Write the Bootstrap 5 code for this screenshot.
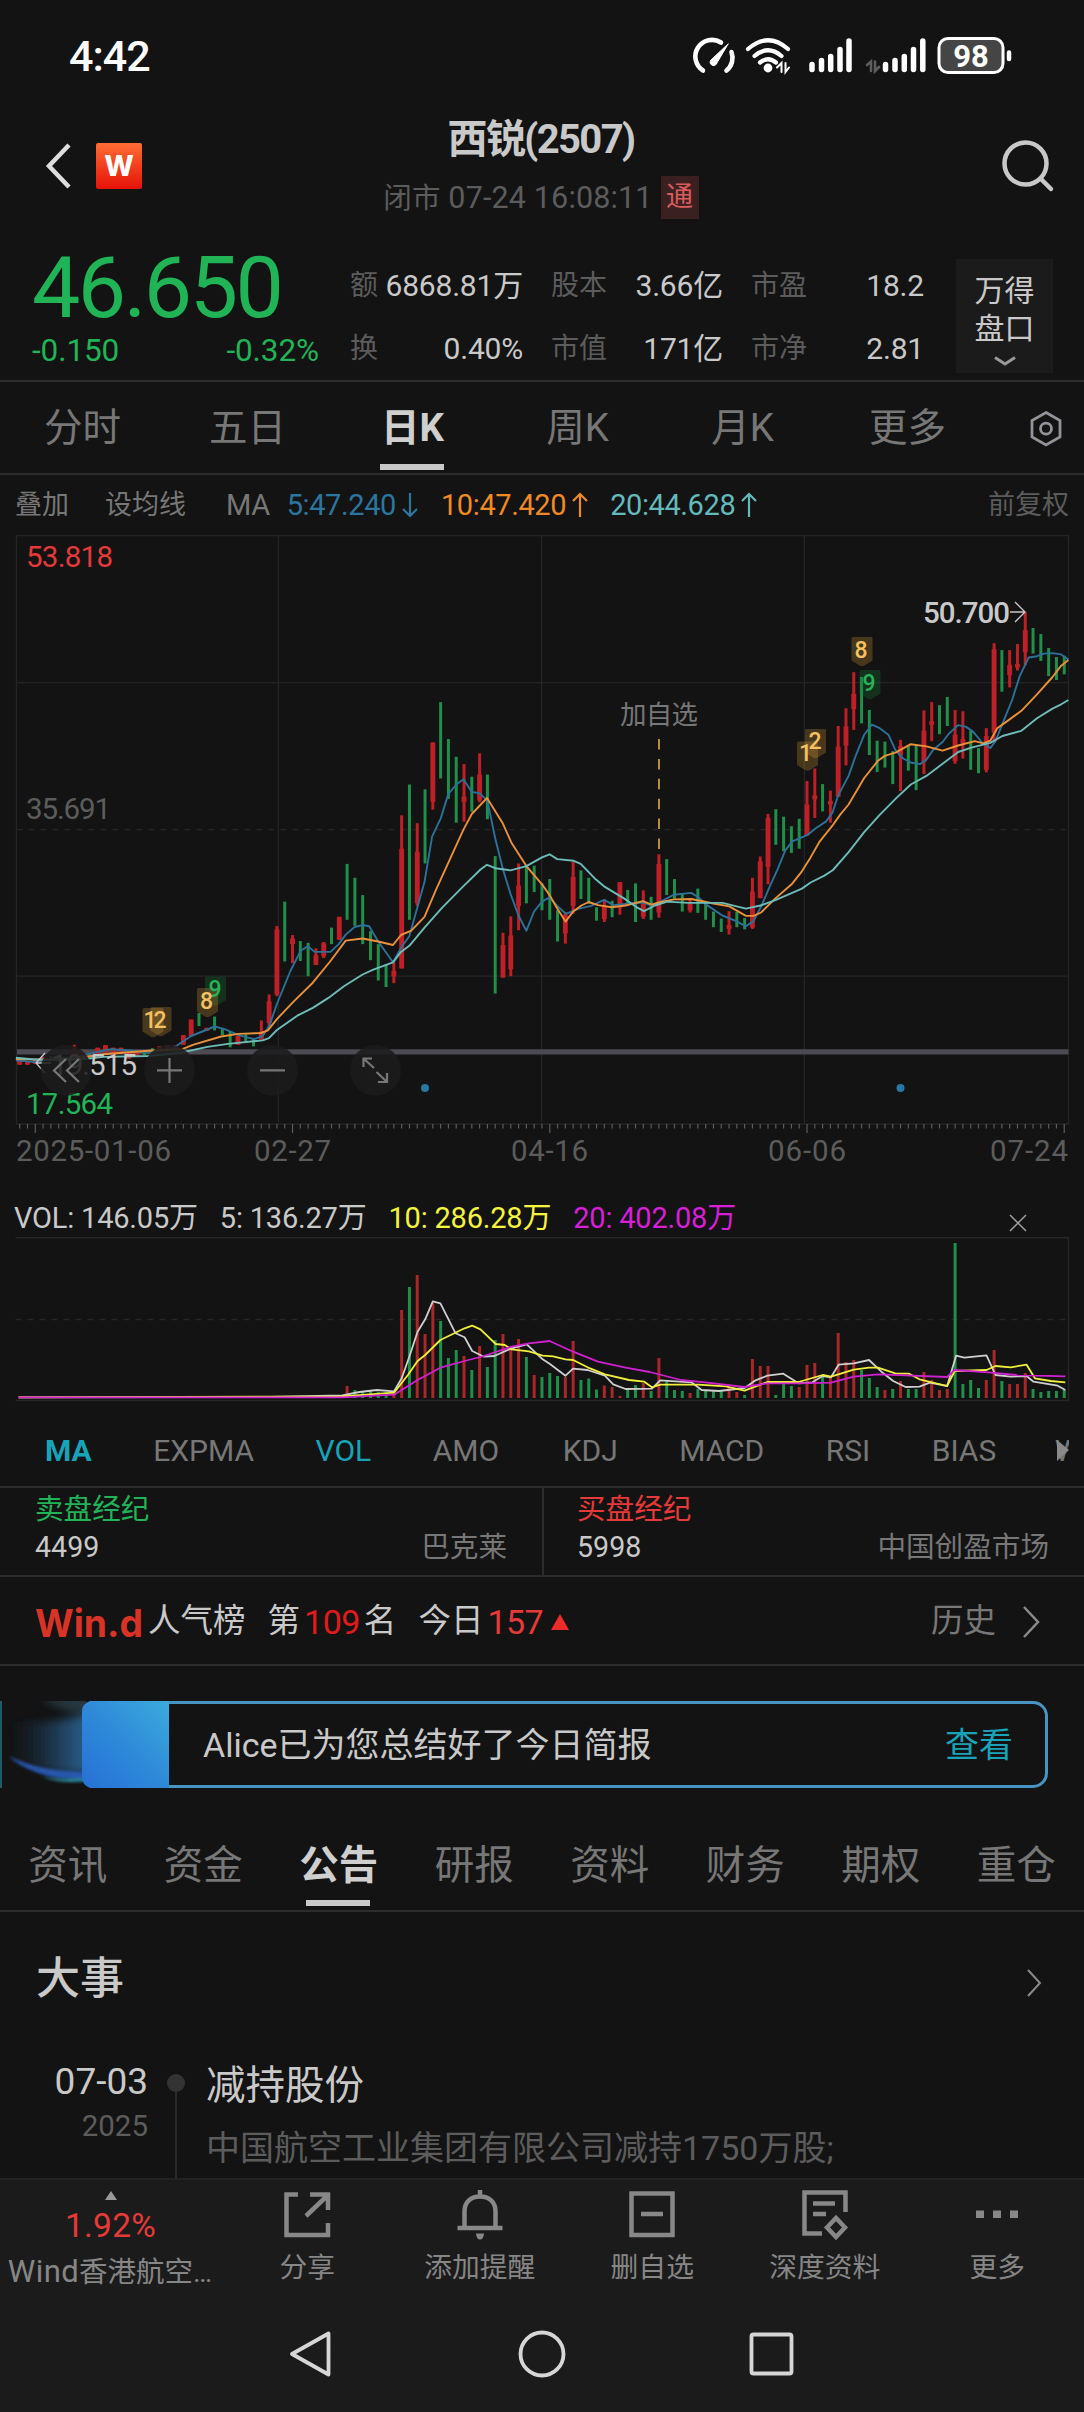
<!DOCTYPE html>
<html lang="zh-CN" data-bs-theme="dark">
<head>
<meta charset="utf-8">
<meta name="viewport" content="width=device-width, initial-scale=1">
<title>西锐(2507)</title>
<link href="https://cdn.jsdelivr.net/npm/bootstrap@5.3.0/dist/css/bootstrap.min.css" rel="stylesheet">
<style>
:root{--ink:#c9c9c9;--dim:#777;--dimmer:#5c5c5c;--up:#e53a38;--down:#21b457;--rule:#2c2c2e;--teal:#19a3b8}
body{margin:0;background:#131313;color:var(--ink);font-family:Roboto,"Noto Sans CJK SC",sans-serif;font-size:28px;line-height:1;width:1084px;height:2412px;overflow:hidden}
svg{display:block;flex:none;overflow:visible}
.t-dim{color:var(--dim)}.t-dimmer{color:var(--dimmer)}.t-up{color:var(--up)}.t-down{color:var(--down)}.t-teal{color:var(--teal)}
.rule-b{border-bottom:2px solid var(--rule)}
.nowrap{white-space:nowrap}
.status-bar{height:112px;padding:0 72px 0 69px}
.clock{font-size:43px;font-weight:500;letter-spacing:-1px}
.head{height:133px;padding:0 29px 0 44px}
.head-left{width:260px;padding-top:31px}
.head-mid{padding-top:5px}
.head-right{width:277px;padding-top:26px}
.app-w{width:46px;height:46px;background:linear-gradient(#ff6d34,#e51208);color:#fff;font:800 28px Inter,sans-serif;border-radius:2px}
.stock-name{font-size:40px;font-weight:700;letter-spacing:-1.6px;line-height:46px}
.stock-time{font-size:30.500px;line-height:43px;letter-spacing:.15px;margin-top:13px}
.stock-time .cjk{font-size:28.500px}
.tong{width:38px;height:43px;background:#3b2021;color:#d95b5b;font-size:27px}
.quote{height:137px;padding:0 31px 0 32px}
.price{font-size:86px;letter-spacing:-2.5px;line-height:86px}
.delta{width:287px;font-size:31.500px;letter-spacing:-.1px}
.stat-grid{width:574px;display:grid;grid-template-columns:173px 172px 173px;column-gap:28px;grid-auto-rows:63px;padding-top:9px;margin-left:31px}
.stat-grid .val{font-size:30px;letter-spacing:-.2px}
.pankou{width:97px;height:114px;background:#1b1b1b;font-size:30px;line-height:38px;padding-top:13px;margin-top:14px}
.ktabs{height:93px;font-size:38.500px;padding-top:2px}
.ktabs .kt{width:165px}
.is-on{color:#cfcfcf;font-weight:700}
.bar{width:64px;height:6px;background:#c9c9c9;position:absolute;left:50%;margin-left:-33px}
.ma-row{height:60px;padding:0 15px;font-size:27px}
.ma-row .num{font-size:29px;letter-spacing:-.4px}
.vol-row{height:52px;padding:15px 57px 0 14px;font-size:29px;letter-spacing:-.2px}
.ind-row{height:81px;gap:61.500px;margin-right:15px;padding:10px 0 0 45px;font-size:30px;overflow:hidden}
.broker{height:91px;font-size:28.600px}
.broker .cell{width:542px;padding:7px 35px 0 35px}
.broker .cell+.cell{border-left:2px solid var(--rule);padding-left:33px}
.broker .vals{margin-top:9px}
.rank{height:89px;padding:2px 44px 0 35px;font-size:32.500px}
.rank .big{font-size:34px}
.banner-wrap{height:156px;padding:35px 36px 0 0}
.alice{height:87px;border:3px solid #4795c4;border-left:0;border-radius:0 15px 15px 0;font-size:34px;padding:0 32px 0 34px}
.ntabs{height:90px;font-size:39.500px}
.sect{height:137px;padding:0 42px 4px 36px;font-size:44px}
.event{height:129px}
.when{width:148px;padding-top:14px}
.rail{width:58px}
.ev-title{font-size:39.500px;padding-top:17px}
.ev-desc{font-size:34px;margin-top:25px}
.foot{height:130px;background:#1b1b1b;border-top:2px solid #232325;font-size:27.800px;color:#868686}
.foot .lead-cell{width:221px}
.foot .act{width:172.500px}
.foot .act svg{margin:10px auto 14px}
.sysnav{background:#1b1b1b;height:104px}
svg text{font-family:Roboto,"Noto Sans CJK SC",sans-serif}
</style>
<script src="https://cdn.jsdelivr.net/npm/bootstrap@5.3.0/dist/js/bootstrap.bundle.min.js"></script>
</head>
<body>

<header class="status-bar d-flex justify-content-between align-items-center text-white">
  <span class="clock">4:42</span>
  <svg width="321" height="46" viewBox="690 33 321 46" fill="none" stroke="#fff" stroke-linecap="round">
    <path d="M720 42.500A16.500 16.500 0 0 0 702 70.500M730.500 52A16.500 16.500 0 0 1 725.500 70.500" stroke-width="4.600"/>
    <path d="M727 44L711 59A3.500 3.500 0 1 0 716 63Z" fill="#fff" stroke-width="1"/>
    <path d="M747 49Q767 31.500 787 49M753.500 56Q767 44.500 780.500 56M759 62.500Q767 56 775 62.500" stroke-width="4.200"/>
    <circle cx="767" cy="68" r="4.400" fill="#fff" stroke="none"/>
    <path d="M776 67.500L780.500 63V72M784.500 63V72L788 67.500" stroke-width="2"/>
    <path d="M811 64.500V69.500M820.500 60.500V69.500M829.700 56.500V69.500M839 49.500V69.500M848 41V69.500" stroke-width="5.500"/>
    <path d="M866 65L870 61.500V71M874 61.500V71L878 67" stroke="#5d5d5d" stroke-width="2.600"/>
    <path d="M884.500 64.500V69.500M894 60.500V69.500M903.300 56.500V69.500M912.500 49.500V69.500M921.800 41V69.500" stroke-width="5.500"/>
    <rect x="938" y="38.500" width="64" height="34" rx="9" fill="#454545" stroke-width="3"/>
    <path d="M1008 52.500V59" stroke-width="4.500"/>
    <text x="970" y="66.500" text-anchor="middle" font-size="31" font-weight="700" fill="#fff" stroke="none">98</text>
  </svg>
</header>

<section class="head d-flex justify-content-between">
  <div class="head-left d-flex">
    <svg class="me-4" width="28" height="46" viewBox="0 0 28 46"><path d="M25 2L5 23L25 44" fill="none" stroke="#dedede" stroke-width="4.500"/></svg>
    <div class="app-w d-flex align-items-center justify-content-center">W</div>
  </div>
  <div class="head-mid text-center nowrap">
    <div class="stock-name">西锐(2507)</div>
    <div class="stock-time d-flex t-dimmer justify-content-center"><span><span class="cjk">闭市</span> 07-24 16:08:11</span><span class="tong d-flex align-items-center justify-content-center ms-2">通</span></div>
  </div>
  <div class="head-right d-flex justify-content-end">
    <svg width="54" height="54" viewBox="1001 138 54 54" fill="none" stroke="#c8c8c8" stroke-width="4.500" stroke-linecap="round"><circle cx="1025.500" cy="163.500" r="21"/><path d="M1041 179L1051 189"/></svg>
  </div>
</section>

<section class="quote d-flex rule-b">
  <div class="t-down">
    <div class="price">46.650</div>
    <div class="delta d-flex justify-content-between mt-1"><span>-0.150</span><span>-0.32%</span></div>
  </div>
  <div class="stat-grid nowrap">
    <div class="d-flex justify-content-between align-items-center"><span class="t-dimmer">额</span><span class="val">6868.81万</span></div>
    <div class="d-flex justify-content-between align-items-center"><span class="t-dimmer">股本</span><span class="val">3.66亿</span></div>
    <div class="d-flex justify-content-between align-items-center"><span class="t-dimmer">市盈</span><span class="val">18.2</span></div>
    <div class="d-flex justify-content-between align-items-center"><span class="t-dimmer">换</span><span class="val">0.40%</span></div>
    <div class="d-flex justify-content-between align-items-center"><span class="t-dimmer">市值</span><span class="val">171亿</span></div>
    <div class="d-flex justify-content-between align-items-center"><span class="t-dimmer">市净</span><span class="val">2.81</span></div>
  </div>
  <div class="pankou ms-auto text-center">万得<br>盘口
    <svg class="mx-auto mt-2" width="22" height="10" viewBox="0 0 22 10"><path d="M1 1.500L11 8L21 1.500" fill="none" stroke="#999" stroke-width="3"/></svg>
  </div>
</section>

<nav class="ktabs d-flex align-items-center t-dim rule-b text-center">
  <span class="kt">分时</span><span class="kt">五日</span>
  <span class="kt is-on position-relative">日K<i class="bar" style="top:55px"></i></span>
  <span class="kt">周K</span><span class="kt">月K</span><span class="kt">更多</span>
  <svg class="ms-auto" style="margin-right:21px" width="34" height="38" viewBox="0 0 34 38" fill="none" stroke="#93939a" stroke-width="2.800"><path d="M17 2.500L31 10.500V27L17 35L3 27V10.500Z"/><circle cx="17" cy="18.700" r="5.500"/></svg>
</nav>

<div class="ma-row d-flex align-items-center t-dim nowrap">
  <span>叠加</span><span style="margin-left:36px">设均线</span><span class="num" style="margin-left:40px">MA</span>
  <span class="num" style="margin-left:17px;color:#2b769f">5:47.240</span>
  <svg style="margin-left:5px" width="18" height="26" viewBox="0 0 18 26" fill="none" stroke="#2b769f" stroke-width="2.200"><path d="M9 1V24M2 17L9 24L16 17"/></svg>
  <span class="num" style="margin-left:22px;color:#f08a24">10:47.420</span>
  <svg style="margin-left:5px" width="18" height="26" viewBox="0 0 18 26" fill="none" stroke="#f08a24" stroke-width="2.200"><path d="M9 25V2M2 9L9 2L16 9"/></svg>
  <span class="num" style="margin-left:21px;color:#63b9bb">20:44.628</span>
  <svg style="margin-left:5px" width="18" height="26" viewBox="0 0 18 26" fill="none" stroke="#63b9bb" stroke-width="2.200"><path d="M9 25V2M2 9L9 2L16 9"/></svg>
  <span class="ms-auto t-dimmer">前复权</span>
</div>

<svg id="kline" width="1084" height="650" viewBox="0 535 1084 650">
  <g fill="none" stroke="#242426" stroke-width="1.300">
    <path d="M16.500 535.700H1068.500V1124H16.500ZM16.500 682.600H1068.500M16.500 976.200H1068.500M278.400 536V1124M541.600 536V1124M804.400 536V1124"/>
    <path d="M16.500 829.600H1068.500" stroke-dasharray="6 6"/>
  </g>
  <path d="M17 1051.800H1068.500" stroke="#4c4b53" stroke-width="5.200"/>
  <g id="candles"></g>
  <g fill="none" stroke-width="1.900" stroke-linejoin="round" id="avg"></g>
  <path d="M659 739V850" stroke="#d9a441" stroke-width="1.700" stroke-dasharray="10.500 9.400"/>
  <g font-size="23" font-weight="500" text-anchor="middle" id="pins"></g>
  <g font-size="29.500">
    <text x="26" y="566.500" fill="#e53a38" textLength="87">53.818</text>
    <text x="26" y="818.500" fill="#5c5c5c" textLength="85">35.691</text>
    <text x="26" y="1113.500" fill="#21b457" textLength="87">17.564</text>
    <text x="923" y="622.500" fill="#c9c9c9" font-weight="500" textLength="87">50.700</text>
    <text x="51" y="1074.500" fill="#c9c9c9" textLength="86">19.515</text>
    <text x="620" y="723.500" fill="#777" font-size="26.500" textLength="78">加自选</text>
    <g fill="#5c5c5c">
      <text x="16" y="1161" textLength="155">2025-01-06</text>
      <text x="254" y="1161" textLength="77">02-27</text>
      <text x="511" y="1161" textLength="77">04-16</text>
      <text x="768" y="1161" textLength="78">06-06</text>
      <text x="990" y="1161" textLength="78">07-24</text>
    </g>
  </g>
  <path d="M1010 612H1025M1015 602L1025 612L1015 622M51 1063H36M45 1053L36 1063L45 1073" fill="none" stroke="#c9c9c9" stroke-width="1.300"/>
  <circle cx="425" cy="1088" r="4" fill="#2a77a3"/><circle cx="900.500" cy="1088" r="4" fill="#2a77a3"/>
  <g fill="#1c1c1c" fill-opacity=".87"><circle cx="66" cy="1070.300" r="25.500"/><circle cx="169.500" cy="1070.300" r="25.500"/><circle cx="272.500" cy="1070.300" r="25.500"/><circle cx="375.500" cy="1070.300" r="25.500"/></g>
  <g fill="none" stroke="#777" stroke-width="2.200">
    <path d="M66 1059L54 1070.500L66 1082M79 1059L67 1070.500L79 1082M157 1070.300H182M169.500 1058V1083M260 1070.300H285"/>
    <path d="M372 1058.500H363.500V1067M363.500 1058.500L374 1068M387 1073V1082H378M387 1082L376.500 1072"/>
  </g>
  <g id="ticks" stroke="#5c5c5c" stroke-width="1.200"></g>
</svg>

<div class="vol-row d-flex align-items-center justify-content-between nowrap">
  <div class="d-flex" style="gap:22px"><span>VOL: 146.05万</span><span>5: 136.27万</span><span style="color:#f5f53c">10: 286.28万</span><span style="color:#d81fd8">20: 402.08万</span></div>
  <svg class="mt-2" width="18" height="18" viewBox="0 0 18 18" stroke="#a0a0a0" stroke-width="1.500"><path d="M1 1L17 17M17 1L1 17"/></svg>
</div>

<svg id="volume" width="1084" height="168" viewBox="0 1237 1084 168">
  <g fill="none" stroke="#262628" stroke-width="1.500"><path d="M15.500 1237.800H1068.500V1400.500H15.500"/><path d="M15.500 1319.500H1068.500" stroke-dasharray="6 6"/></g>
  <g id="vbars" stroke-width="3"></g>
  <g fill="none" stroke-width="1.800" stroke-linejoin="round" id="vavg"></g>
</svg>

<nav class="ind-row d-flex align-items-center t-dim nowrap">
  <span class="t-teal fw-bold">MA</span><span>EXPMA</span><span class="t-teal">VOL</span><span>AMO</span><span style="margin-left:2px">KDJ</span><span>MACD</span><span>RSI</span><span>BIAS</span>
  <span class="position-relative" style="margin-left:-3px">W<svg class="position-absolute" style="left:2px;top:4px" width="13" height="22" viewBox="0 0 13 22"><path d="M0 0L12 10L0 21Z" fill="#8a8a8a"/></svg></span>
</nav>

<section class="broker d-flex rule-b" style="border-top:2px solid var(--rule)">
  <div class="cell"><div class="t-down">卖盘经纪</div><div class="vals d-flex justify-content-between"><span>4499</span><span class="t-dim">巴克莱</span></div></div>
  <div class="cell"><div class="t-up">买盘经纪</div><div class="vals d-flex justify-content-between"><span>5998</span><span class="t-dim">中国创盈市场</span></div></div>
</section>

<section class="rank d-flex align-items-center rule-b nowrap">
  <svg width="109" height="38" viewBox="0 0 109 38"><text x="0" y="34" style="font-family:Inter,sans-serif" font-size="38" font-weight="700" fill="#d93226" textLength="108" lengthAdjust="spacingAndGlyphs">Win.d</text></svg>
  <span style="margin-left:4px">人气榜</span><span style="margin-left:22px">第</span><span class="big ms-1" style="color:#e01b1b;letter-spacing:-.5px">109</span><span class="ms-1">名</span><span style="margin-left:22px">今日</span><span class="big t-up ms-1" style="letter-spacing:-.5px">157</span>
  <svg class="ms-2" width="18" height="16" viewBox="0 0 18 16"><path d="M9 0L18 16H0Z" fill="#ee2b28"/></svg>
  <span class="ms-auto t-dim">历史</span>
  <svg style="margin-left:26px" width="18" height="32" viewBox="0 0 18 32"><path d="M2 1L16 16L2 31" fill="none" stroke="#8a8a8a" stroke-width="2.500"/></svg>
</section>

<div class="banner-wrap d-flex align-items-start">
  <svg width="169" height="87" viewBox="0 0 169 87">
    <defs>
      <linearGradient id="gb" x1="0" y1="1" x2="1" y2="0"><stop offset="0" stop-color="#2770d6"/><stop offset=".5" stop-color="#2e8ad8"/><stop offset="1" stop-color="#3cabdc"/></linearGradient>
      <linearGradient id="gf" x1="0" x2="1"><stop offset="0" stop-color="#151c28" stop-opacity=".1"/><stop offset=".45" stop-color="#1b2f42"/><stop offset="1" stop-color="#2c6290"/></linearGradient>
      <filter id="soft" x="-20%" y="-20%" width="140%" height="140%"><feGaussianBlur stdDeviation="4"/></filter>
      <filter id="soft2" x="-20%" y="-40%" width="140%" height="180%"><feGaussianBlur stdDeviation="1.800"/></filter>
      <clipPath id="cp"><rect width="86" height="87"/></clipPath>
    </defs>
    <g clip-path="url(#cp)">
      <path d="M40 -4L90 -6V16Q60 10 40 -4Z" fill="#26383f" filter="url(#soft)"/>
      <path d="M12 20Q50 24 90 12V72Q50 76 14 56Z" fill="url(#gf)" filter="url(#soft)"/>
      <path d="M9 55Q40 71 90 71V79Q60 80 38 72Q18 65 9 55Z" fill="#2b5fc4" fill-opacity=".85" filter="url(#soft2)"/>
      <path d="M42 76Q66 80 90 76V79Q65 84 42 76Z" fill="#2c8f9c" filter="url(#soft2)"/>
    </g>
    <path d="M1 0V87" stroke="#1e5a68" stroke-width="2"/>
    <path d="M90 0H169V87H90Q82 84 82 76V10Q82 3 90 0Z" fill="url(#gb)"/>
  </svg>
  <div class="alice flex-fill d-flex align-items-center justify-content-between nowrap"><span>Alice已为您总结好了今日简报</span><span class="t-teal">查看</span></div>
</div>

<nav class="ntabs d-flex align-items-center t-dim rule-b text-center">
  <span class="col">资讯</span><span class="col">资金</span><span class="col is-on position-relative">公告<i class="bar" style="top:54px"></i></span><span class="col">研报</span><span class="col">资料</span><span class="col">财务</span><span class="col">期权</span><span class="col">重仓</span>
</nav>

<div class="sect d-flex align-items-center justify-content-between fw-medium">
  <span>大事</span><svg class="mt-2" width="16" height="28" viewBox="0 0 16 28"><path d="M2 1L14 14L2 27" fill="none" stroke="#8a8a8a" stroke-width="2"/></svg>
</div>

<section class="event d-flex nowrap">
  <div class="when text-end"><div style="font-size:37px">07-03</div><div class="t-dimmer" style="font-size:29.500px;margin-top:12px">2025</div></div>
  <div class="rail"><svg width="58" height="129" viewBox="148 2049 58 129"><path d="M176 2090V2178" stroke="#2a2a2c" stroke-width="2"/><circle cx="176" cy="2083" r="9" fill="#333"/></svg></div>
  <div><div class="ev-title">减持股份</div><div class="ev-desc t-dimmer">中国航空工业集团有限公司减持1750万股;</div></div>
</section>

<footer class="foot d-flex text-center nowrap">
  <div class="lead-cell"><svg class="mx-auto" style="margin-top:11px" width="12" height="9" viewBox="0 0 12 9"><path d="M6 0L12 9H0Z" fill="#999"/></svg><div class="t-up" style="font-size:33.500px;margin:9px 0 13px;letter-spacing:.2px">1.92%</div><div class="d-flex justify-content-center align-items-baseline" style="font-size:28.500px"><span style="font-size:31px;letter-spacing:.4px">Wind</span>香港航空<span style="letter-spacing:1px">…</span></div></div>
  <div class="act"><svg width="50" height="50" viewBox="0 0 50 50" fill="none" stroke="#888" stroke-width="4.500"><path d="M16 4.500H4.500V45H46V33M28 4.500H46V20M46 5L24 26"/></svg>分享</div>
  <div class="act"><svg width="50" height="50" viewBox="0 0 50 50" fill="none" stroke="#888" stroke-width="4.500"><path d="M9.500 38V21C9.500 12 16 6.500 25 6.500S40.500 12 40.500 21V38M2.500 38H47.500M25 0V7"/><path d="M21 43.500H29Q28.500 49.500 25 49.500T21 43.500Z" fill="#888" stroke="none"/></svg>添加提醒</div>
  <div class="act"><svg width="50" height="50" viewBox="0 0 50 50" fill="none" stroke="#888" stroke-width="4.500"><path d="M4.500 3.500H45.500V45H4.500ZM14 24H36"/></svg>删自选</div>
  <div class="act"><svg width="50" height="50" viewBox="0 0 50 50" fill="none" stroke="#888" stroke-width="4.500"><path d="M22 43.500H4.500V2.500H45.500V22M13 13.500H35M13 24H26"/><path d="M36 28L45 37.500L36 47L27 37.500Z"/></svg>深度资料</div>
  <div class="act"><svg width="50" height="50" viewBox="0 0 50 50" fill="#888"><path d="M4 20.500h8v7.500H4zM21 20.500h8v7.500H21zM38 20.500h8v7.500H38z"/></svg>更多</div>
</footer>

<div class="sysnav"><svg width="1084" height="104" viewBox="0 2308 1084 104" fill="none" stroke="#d6d6d6" stroke-width="3.800" stroke-linejoin="round">
  <path d="M328.500 2333.500V2374.500L292 2354Z"/><circle cx="542" cy="2354" r="21.500"/><rect x="751.500" y="2334.500" width="40" height="39" rx="2"/>
</svg></div>

<script>
const RED='#bf2027', GREEN='#1f8f49', step=7.795, x0=19.7;
const X=i=>x0+i*step, Y=v=>520+v/2.306;
// colour, high, low, body top, body bottom (one entry per trading day)
const days=`r 1246 1256;r 1248 1256;r 1246 1254;r 1238 1246;g 1236 1243;r 1240 1247;r 1240 1246;r 1210 1240 1234 1240;r 1228 1240;g 1232 1240;r 1217 1232;r 1211 1228;r 1217 1232;r 1217 1230;r 1226 1242;r 1228 1238;g 1225 1235;g 1218 1228;r 1214 1224;r 1211 1220;r 1211 1220;r 1188 1210;r 1152 1190;g 1137 1167;r 1171 1178;g 1145 1177;g 1172 1188;g 1180 1216;r 1190 1210;g 1186 1203;g 1195 1214;r 1154 1198 1180 1198;r 1094 1168 1110 1160;r 936 1098 944 1094;g 880 1018;r 957 1022 965 978;g 971 1017;g 975 1052;r 988 1026 1004 1026;r 973 1010 976 1006;g 940 978;r 915 968;g 793 922;g 825 936;g 865 978;g 948 1015;g 978 1062;g 1024 1077;r 1020 1068 1040 1052;r 681 1034 758 1034;g 610 922;r 699 890 765 884;g 621 792;r 513 668 513 650;g 420 596;g 505 643;g 546 698;r 563 696 638 650;g 592 673;r 538 651 587 647;g 587 690;g 775 1092;r 952 1055 980 1055;r 914 1052 958 1036;r 792 946 843 890;g 800 884;g 797 858;g 838 900;g 828 922;g 900 972;r 904 977 910 953;r 788 908 823 890;g 808 874;g 825 885;g 893 924;r 875 927 890 920;g 878 916;r 835 910 835 893;g 853 887;g 838 927;r 854 920 885 915;g 869 922;r 771 917 793 905;g 782 865;g 828 873;g 860 903;r 872 905 885 900;g 850 906;g 883 922;g 903 939;g 919 950;r 902 956 934 943;g 904 939;g 918 944;r 825 943 857 940;r 776 872 787 872;r 678 840 687 800;g 667 749;g 684 764;g 706 768;g 689 758;r 602 727 656 727;r 573 687 635 644;g 609 672;r 624 698 648 656;r 475 638 523 638;r 434 566 476 520;r 351 484 401 436;g 362 469;g 438 542;g 509 581;g 511 571;g 533 609;r 507 625 521 543;g 519 578;g 519 623;r 439 586 486 558;r 420 510 464 472;g 427 494;g 408 475;r 438 562 495 556;r 441 550 505 515;g 486 576;g 526 584;r 480 582 498 576;r 284 513 298 490;g 300 396;r 300 386 334 358;r 286 347 332 340;r 212 335 254 305;g 249 308;g 263 325;g 295 360;g 316 369;g 313 356`.split(';').map(s=>s.split(' '));
document.getElementById('candles').innerHTML=days.map(([c,h,l,a,b],i)=>{
  const col=c=='r'?RED:GREEN;
  let s=`<path d="M${X(i)} ${Y(h)}V${Y(l)}" stroke="${col}" stroke-width="3"/>`;
  if(c=='r') s+=`<path d="M${X(i)} ${Y(a||h)}V${Y(b||l)}" stroke="${col}" stroke-width="4.9"/>`;
  return s;}).join('');
const poly=(str,fx,fy,col)=>`<polyline stroke="${col}" points="${str.trim().split(' ').map(p=>{const[a,b]=p.split(',');return fx(+a).toFixed(1)+','+fy(+b).toFixed(1)}).join(' ')}"/>`;
const kx=a=>a/2.893;
document.getElementById('avg').innerHTML=
poly('46,1246 100,1250 150,1243 230,1237 280,1227 320,1220 385,1224 430,1228 500,1218 553,1190 621,1168 650,1174 690,1188 735,1197 760,1190 780,1165 801,1116 840,1040 870,993 891,983 910,996 956,996 980,978 1000,956 1025,939 1049,934 1068,937 1094,972 1137,1020 1162,984 1184,960 1207,895 1228,835 1250,730 1275,688 1297,632 1320,610 1341,598 1365,627 1387,630 1410,647 1433,735 1455,805 1477,862 1500,912 1523,947 1545,903 1568,880 1590,870 1612,890 1637,908 1675,896 1710,890 1748,876 1775,888 1830,884 1861,882 1885,889 1906,882 1950,864 2000,860 2020,870 2045,888 2090,912 2130,925 2158,937 2180,925 2205,886 2227,845 2250,805 2272,762 2292,741 2337,726 2360,711 2390,695 2408,675 2425,635 2455,590 2475,545 2500,495 2522,472 2545,480 2570,495 2590,530 2613,550 2637,560 2662,563 2680,553 2700,530 2727,512 2745,493 2772,473 2795,477 2815,488 2840,512 2865,526 2880,510 2900,470 2928,415 2950,360 2976,317 3000,314 3020,308 3045,307 3070,310 3091,322',kx,Y,'#2c719a')+
poly('46,1243 150,1245 230,1240 300,1232 430,1224 527,1220 560,1210 640,1191 690,1185 755,1183 775,1177 801,1151 850,1110 905,1067 955,1018 1000,970 1049,965 1094,972 1137,980 1160,957 1190,947 1228,915 1260,855 1300,785 1340,715 1365,678 1409,641 1455,700 1480,745 1523,798 1568,840 1590,865 1610,893 1636,926 1658,903 1682,889 1703,881 1730,888 1770,893 1810,889 1860,879 1885,887 1906,882 1950,875 2000,874 2060,884 2110,891 2158,913 2180,913 2202,905 2240,875 2290,840 2320,810 2345,778 2370,743 2408,705 2430,680 2455,656 2500,595 2540,555 2560,544 2592,536 2635,517 2680,522 2727,532 2772,520 2820,510 2845,515 2865,509 2885,480 2910,466 2955,440 3000,402 3045,362 3070,336 3091,323',kx,Y,'#ea9139')+
poly('46,1240 100,1244 230,1244 300,1238 430,1236 520,1229 600,1215 660,1208 760,1200 778,1195 801,1176 860,1143 905,1125 950,1102 995,1075 1049,1048 1080,1037 1137,1020 1160,996 1184,982 1228,940 1280,893 1340,845 1390,806 1409,795 1433,803 1477,808 1523,798 1568,778 1590,771 1612,782 1660,786 1680,793 1720,826 1750,846 1810,875 1840,892 1863,902 1895,889 1930,880 1990,883 2090,883 2158,896 2200,889 2245,876 2320,850 2345,836 2385,820 2410,807 2455,766 2500,720 2545,680 2592,642 2635,610 2680,590 2727,562 2772,535 2810,525 2865,514 2900,498 2955,486 3000,457 3045,435 3070,425 3091,415',kx,Y,'#6dbcb9');
// event pins: left, top, digit, digit x, digit baseline, colour
const gold='#f5c261';
const pins=[[142.5,1008,'1',150,1028,gold],[150.5,1007,'2',160,1028,gold],[205,976.5,'9',215,997,'#27b357'],[197,988,'8',206.5,1008.5,gold],[851.5,637,'8',861,658,gold],[859.5,670,'9',869,691,'#27b357'],[797,741.5,'1',805.5,761,gold],[805,729,'2',815,749,gold]];
document.getElementById('pins').innerHTML=pins.map(([x,y,t,tx,ty,c])=>
 `<path d="M${x+1.5} ${y}h18q1.500 0 1.500 1.500v22l-8 5q-2.500 1.500-5 0l-8-5v-22q0-1.500 1.500-1.500z" fill="${c==gold?'#d29a3c':'#15853c'}" fill-opacity=".27"/>`).join('')+pins.map(([x,y,t,tx,ty,c])=>`<text x="${tx}" y="${ty}" fill="${c}">${t}</text>`).join('');
document.getElementById('ticks').innerHTML=days.map((d,i)=>`<path d="M${X(i)} 1124V${i%33==2?1133:1128.5}"/>`).join('');
const vols='r12 g8 g7 g7 g6 g6 r5 r88 g111 r123 r64 r95 g77 g40 g48 r42 g28 r52 g31 g58 r64 r51 r59 g41 r23 g21 g25 g22 r21 r57 g18 g19.5 g8.5 r12.5 r11 r2 g8.5 g13 r15 g7 r40 g18 g8 g7 r5 g9 g8 g7 g7 r11 r6 g3 r39 r32 r32 g3 g14 g12 r11 r33 r35 g23 r21 r65 r36 r38 g28 g20 g11 r8 g9 r17 g9 g9 r26 r18 r8 r9 g155 g14 g18 g10 r18 r48 g17 r14 r14 r25 g9 g6 g7 g7 g8'.split(' ');
document.getElementById('vbars').innerHTML=vols.map((s,k)=>`<path d="M${X(k+42)} 1398v-${s.slice(1)}" stroke="${s[0]=='r'?'#a92728':'#1f8f49'}"/>`).join('');
const vx=a=>a/1.4465, vy=b=>1190+b/3;
document.getElementById('vavg').innerHTML=
poly('27,622 390,621 495,616 520,606 545,600 570,604 581,565 592,500 604,425 615,388 626,334 637,340 659,430 672,442 683,483 700,500 715,498 740,475 762,463 785,508 795,521 818,557 829,536 850,540 875,557 887,583 905,597 943,596 955,571 1000,577 1015,600 1040,603 1077,594 1092,572 1110,557 1133,551 1155,580 1175,577 1190,558 1202,562 1213,524 1235,520 1257,510 1275,545 1292,573 1310,591 1330,590 1345,578 1370,588 1383,497 1395,503 1427,496 1440,555 1462,560 1485,558 1495,575 1530,587 1541,600',vx,vy,'#cfcfcf')+
poly('27,622 495,619 570,608 590,555 604,513 615,495 637,450 672,415 683,407 695,418 717,462 730,465 740,478 765,484 785,497 800,499 818,508 829,510 850,532 875,553 910,570 932,575 943,592 955,584 1010,584 1050,589 1077,602 1110,576 1155,576 1190,555 1202,560 1235,539 1257,533 1270,533 1295,550 1315,551 1330,568 1370,588 1381,543 1427,540 1440,528 1462,532 1485,524 1497,565 1520,573 1541,577',vx,vy,'#f0f03a')+
poly('27,622 495,622 570,614 604,570 637,533 672,513 700,498 740,470 765,460 795,453 829,485 865,515 905,533 940,546 985,570 1020,577 1077,591 1110,580 1155,580 1202,578 1235,560 1270,553 1310,556 1370,561 1381,540 1430,547 1470,555 1541,559',vx,vy,'#d020d0');
</script>
</body>
</html>
